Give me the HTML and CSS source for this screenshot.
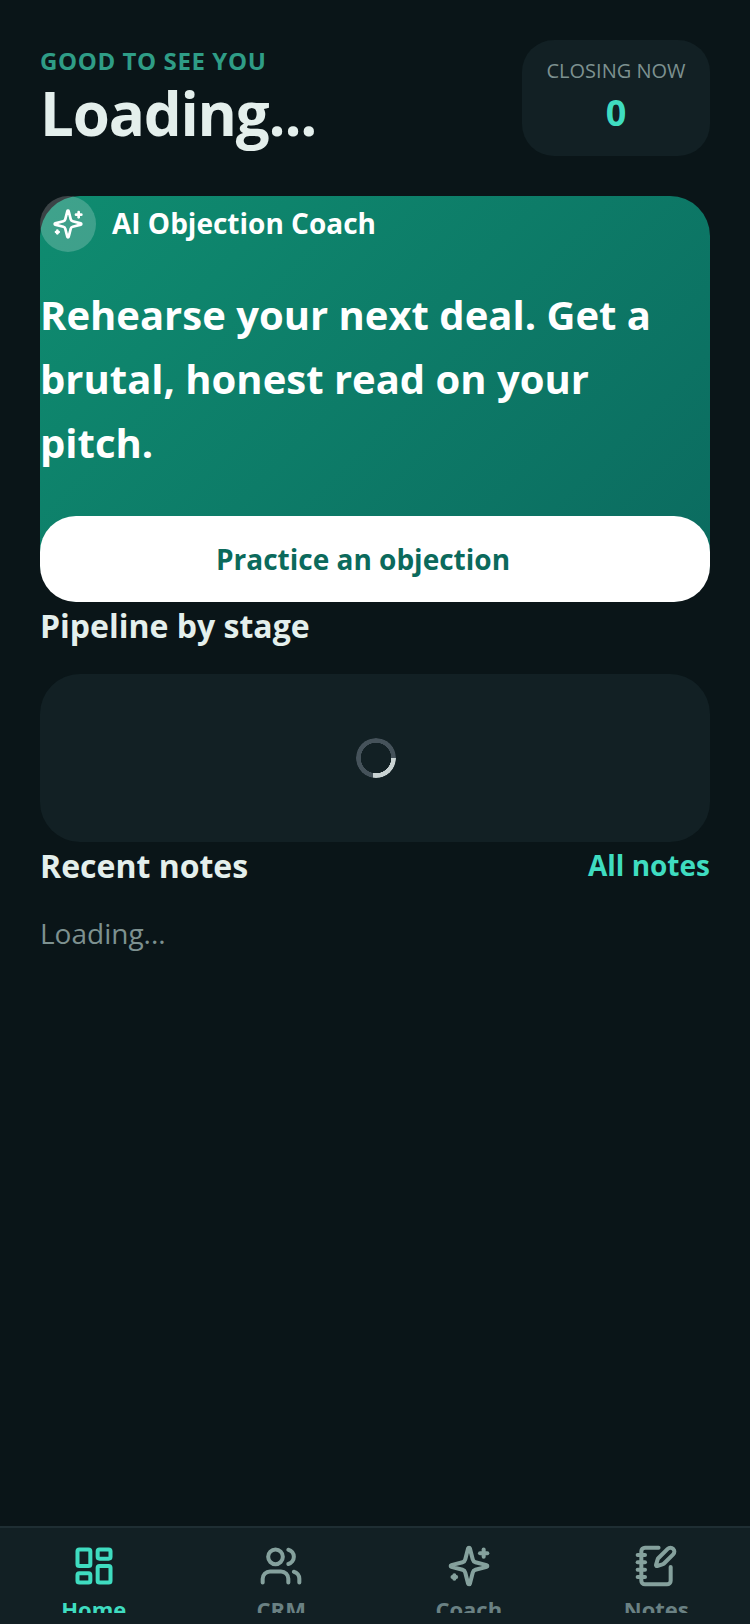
FILE: index.html
```html
<!DOCTYPE html>
<html lang="en">

<head>
    <meta charset="UTF-8">
    <meta name="viewport" content="width=device-width, initial-scale=1.0">
    <title>Home</title>
    <link rel="stylesheet" href="styles.css">
</head>

<body>

    <main class="contenido">
        <header class="cabecera">
            <div>
                <p class="saludo">GOOD TO SEE YOU</p>
                <h1 class="nombre">Loading...</h1>
            </div>
            <div class="cierre">
                <span class="cierre-label">CLOSING NOW</span>
                <span class="cierre-valor">0</span>
            </div>
        </header>

        <section class="coach">
            <div class="coach-fila">
                <span class="coach-icono">
                    <svg class="icono-coach" viewBox="0 0 24 24">
                        <path d="M9.937 15.5A2 2 0 0 0 8.5 14.063l-6.135-1.582a.5.5 0 0 1 0-.962L8.5 9.936A2 2 0 0 0 9.937 8.5l1.582-6.135a.5.5 0 0 1 .963 0L14.063 8.5A2 2 0 0 0 15.5 9.937l6.135 1.581a.5.5 0 0 1 0 .964L15.5 14.063a2 2 0 0 0-1.437 1.437l-1.582 6.135a.5.5 0 0 1-.963 0z" />
                        <path d="M20 3v4" />
                        <path d="M22 5h-4" />
                        <path d="M4 17v2" />
                        <path d="M5 18H3" />
                    </svg>
                </span>
                <span class="coach-titulo">AI Objection Coach</span>
            </div>
            <p class="coach-texto">Rehearse your next deal. Get a brutal, honest read on your pitch.</p>
            <button class="coach-boton" type="button">Practice an objection</button>
        </section>

        <h2 class="seccion seccion-pipeline">Pipeline by stage</h2>
        <div class="pipeline">
            <span class="spinner"></span>
        </div>

        <div class="notas-fila">
            <h2 class="seccion">Recent notes</h2>
            <a class="notas-link" href="#">All notes</a>
        </div>
        <p class="notas-vacio">Loading...</p>
    </main>

    <nav class="barra">
        <a class="tab activo" href="#">
            <svg class="icono" viewBox="0 0 24 24">
                <rect x="3" y="3" width="7" height="9" rx="1" />
                <rect x="14" y="3" width="7" height="5" rx="1" />
                <rect x="14" y="12" width="7" height="9" rx="1" />
                <rect x="3" y="16" width="7" height="5" rx="1" />
            </svg>
            <span class="tab-label">Home</span>
        </a>
        <a class="tab" href="#">
            <svg class="icono" viewBox="0 0 24 24">
                <path d="M16 21v-2a4 4 0 0 0-4-4H6a4 4 0 0 0-4 4v2" />
                <circle cx="9" cy="7" r="4" />
                <path d="M22 21v-2a4 4 0 0 0-3-3.87" />
                <path d="M16 3.13a4 4 0 0 1 0 7.75" />
            </svg>
            <span class="tab-label">CRM</span>
        </a>
        <a class="tab" href="#">
            <svg class="icono" viewBox="0 0 24 24">
                <path d="M9.937 15.5A2 2 0 0 0 8.5 14.063l-6.135-1.582a.5.5 0 0 1 0-.962L8.5 9.936A2 2 0 0 0 9.937 8.5l1.582-6.135a.5.5 0 0 1 .963 0L14.063 8.5A2 2 0 0 0 15.5 9.937l6.135 1.581a.5.5 0 0 1 0 .964L15.5 14.063a2 2 0 0 0-1.437 1.437l-1.582 6.135a.5.5 0 0 1-.963 0z" />
                <path d="M20 3v4" />
                <path d="M22 5h-4" />
                <path d="M4 17v2" />
                <path d="M5 18H3" />
            </svg>
            <span class="tab-label">Coach</span>
        </a>
        <a class="tab" href="#">
            <svg class="icono" viewBox="0 0 24 24">
                <path d="M13.4 2H6a2 2 0 0 0-2 2v16a2 2 0 0 0 2 2h12a2 2 0 0 0 2-2v-7.4" />
                <path d="M2 6h4" />
                <path d="M2 10h4" />
                <path d="M2 14h4" />
                <path d="M2 18h4" />
                <path d="M21.378 5.626a1 1 0 1 0-3.004-3.004l-5.01 5.012a2 2 0 0 0-.506.854l-.837 2.87a.5.5 0 0 0 .62.62l2.87-.837a2 2 0 0 0 .854-.506z" />
            </svg>
            <span class="tab-label">Notes</span>
        </a>
    </nav>

</body>

</html>
```

FILE: styles.css
```css
* {
    box-sizing: border-box;
}

body {
    font-family: "Open Sans", sans-serif;
    margin: 0;
    padding: 0;
    height: 1624px;
    display: flex;
    flex-direction: column;
    background-color: #0a1518;
    color: #e4efec;
    overflow: hidden;
}

p,
h1,
h2 {
    margin: 0;
}

.contenido {
    flex: 1;
    padding: 40px 40px 0;
}

.cabecera {
    display: flex;
    justify-content: space-between;
    align-items: flex-start;
    margin-bottom: 40px;
}

.saludo {
    font-size: 24px;
    line-height: 42px;
    font-weight: 700;
    letter-spacing: 0.6px;
    color: #2f9d86;
}

.nombre {
    font-size: 60px;
    line-height: 62px;
    font-weight: 700;
    letter-spacing: -1.2px;
    color: #e4efec;
}

.cierre {
    width: 188px;
    height: 116px;
    padding-top: 16px;
    display: flex;
    flex-direction: column;
    align-items: center;
    background-color: #122024;
    border-radius: 32px;
}

.cierre-label {
    font-size: 20px;
    line-height: 30px;
    color: #7d9190;
}

.cierre-valor {
    margin-top: 2px;
    font-size: 36px;
    line-height: 50px;
    font-weight: 700;
    color: #3fdcc0;
}

.coach {
    background: linear-gradient(135deg, #0f8c70, #0b6a5f);
    border-radius: 40px;
}

.coach-fila {
    display: flex;
    align-items: center;
    gap: 16px;
    margin-bottom: 31px;
}

.coach-icono {
    width: 56px;
    height: 56px;
    border-radius: 50%;
    background-color: rgba(255, 255, 255, 0.2);
    display: flex;
    align-items: center;
    justify-content: center;
}

.icono-coach {
    width: 32px;
    height: 32px;
    fill: none;
    stroke: #fff;
    stroke-width: 2;
    stroke-linecap: round;
    stroke-linejoin: round;
}

.coach-titulo {
    font-size: 28px;
    font-weight: 700;
    color: #fff;
    padding-bottom: 2px;
}

.coach-texto {
    font-size: 40px;
    line-height: 64px;
    font-weight: 700;
    color: #fff;
    margin-bottom: 41px;
}

.coach-boton {
    display: block;
    width: 100%;
    height: 86px;
    padding: 0 24px 0 0;
    background-color: #fff;
    border: none;
    border-radius: 36px;
    font-family: inherit;
    font-size: 28px;
    font-weight: 700;
    color: #0b6a5c;
}

.seccion {
    font-size: 32px;
    line-height: 48px;
    font-weight: 700;
    color: #e4efec;
}

.seccion-pipeline {
    margin-bottom: 24px;
}

.pipeline {
    height: 168px;
    padding-left: 2px;
    background-color: #122024;
    border-radius: 40px;
    display: flex;
    align-items: center;
    justify-content: center;
}

.spinner {
    width: 40px;
    height: 40px;
    border-radius: 50%;
    background: conic-gradient(from 90deg, #c9d3d3 0 100deg, #45525a 100deg);
    -webkit-mask: radial-gradient(circle, transparent 15px, #000 15.5px);
    mask: radial-gradient(circle, transparent 15px, #000 15.5px);
}

.notas-fila {
    display: flex;
    justify-content: space-between;
    align-items: center;
    margin-bottom: 23px;
}

.notas-link {
    padding-bottom: 2px;
    font-size: 28px;
    font-weight: 700;
    color: #3fdcc0;
    text-decoration: none;
}

.notas-vacio {
    font-size: 28px;
    line-height: 40px;
    color: #7d9190;
}

.barra {
    height: 98px;
    padding-top: 16px;
    display: flex;
    align-items: flex-start;
    background-color: #122024;
    border-top: 2px solid #1f2e33;
}

.tab {
    flex: 1;
    height: 69px;
    overflow: hidden;
    display: flex;
    flex-direction: column;
    align-items: center;
    text-decoration: none;
    color: #6a8183;
}

.tab.activo {
    color: #3fdcc0;
}

.icono {
    width: 44px;
    height: 44px;
    flex: none;
    fill: none;
    stroke: #85a19d;
    stroke-width: 2.2;
    stroke-linecap: round;
    stroke-linejoin: round;
}

.tab.activo .icono {
    stroke: #3fdcc0;
}

.tab-label {
    margin-top: 6px;
    font-size: 22px;
    line-height: 30px;
    font-weight: 700;
}
```
